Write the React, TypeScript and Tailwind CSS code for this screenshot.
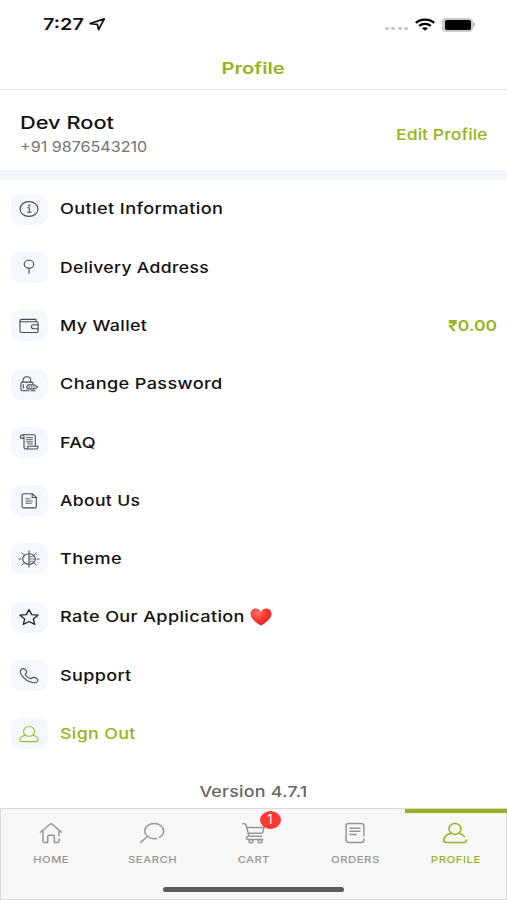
import React from "react";

type IconProps = { className?: string; children: React.ReactNode; box?: string };

function Icon({ className = "h-5 w-6", children, box = "0 0 24 20" }: IconProps) {
  return (
    <svg viewBox={box} fill="none" stroke="currentColor" strokeWidth="1.1" strokeLinecap="round" strokeLinejoin="round" className={"block shrink-0 " + className}>
      {children}
    </svg>
  );
}

const InfoIcon = () => (
  <Icon>
    <ellipse cx="12" cy="10" rx="9" ry="7.4" />
    <path d="M12.3 13.1V8.7h-1.5M10.6 13.2h3.4" />
    <circle cx="12.1" cy="6.5" r=".45" fill="currentColor" />
  </Icon>
);
const PinIcon = () => (
  <Icon>
    <ellipse cx="12" cy="7.2" rx="4.8" ry="3.9" />
    <path d="M12 11.2v5" />
  </Icon>
);
const WalletIcon = () => (
  <Icon>
    <path d="M3 5.3C3 4 3.8 3.4 5 3.4h14v2.200M3 5.100v9.800c0 1 .7 1.600 1.800 1.600h15c.8 0 1.300-.5 1.300-1.300V7c0-.8-.5-1.300-1.300-1.300H4" />
    <path d="M21 8.800h-4.200c-1.500 0-2.400.8-2.400 2s.9 2 2.400 2H21" />
  </Icon>
);
const LockIcon = () => (
  <Icon>
    <path d="M12 16.700H5.600c-1 0-1.700-.6-1.700-1.500V9.500c0-.9.7-1.400 1.700-1.400h8.800c1 0 1.600.5 1.600 1.400M6 8V6.600c0-2.200 1.300-3.800 3.800-3.800s3.900 1.600 3.900 3.800V8M6.300 10.500v3.500" />
    <path d="M9.800 12.900c0-1.300.8-2 2-2h5.600l3.200 2-2.600 2h-5.700c-1.500 0-2.500-.7-2.500-2ZM12 12.900h.5M14.300 12.900h.5M16.700 12.900h.5M14 16.700h4" />
  </Icon>
);
const ScrollIcon = () => (
  <Icon>
    <path d="M7 6.100H3.500V4c0-.8.7-1.300 1.700-1.300h11.600c1 0 1.500.6 1.500 1.400v10.100M5.200 2.800C6.400 2.900 7 3.500 7 4.600v10.800c0 .9.7 1.600 1.800 1.600h10.400c1 0 1.700-.7 1.700-1.600v-1.100H10.800v1.200c0 .9-.7 1.500-1.700 1.500" />
    <path d="M9.500 5.600h6M9.500 7.700h6M9.500 9.800h6M10.500 11.900h5" strokeWidth=".9" />
  </Icon>
);
const DocIcon = () => (
  <Icon>
    <path d="M6.800 2.800h8.700l3.800 3.400v9.200c0 .9-.7 1.500-1.700 1.500H6.800c-1 0-1.700-.6-1.700-1.500V4.300c0-.9.7-1.500 1.700-1.500ZM15.200 3v3.500h4" />
    <path d="M8.800 7.800h4M8.800 10h6.500M8.800 12.200h5.500" strokeWidth=".9" />
  </Icon>
);
const ThemeIcon = () => (
  <Icon>
    <ellipse cx="12" cy="10" rx="6.300" ry="5.300" />
    <path d="M12 1.800v16.400M2 10h2M20 10h2M4.800 3.900l1.700 1.500M19.200 3.900l-1.700 1.500M4.800 16.100l1.700-1.500M19.200 16.100l-1.700-1.500" strokeWidth="1" />
    <path d="M12 7.700h4M12 10h5.600M12 12.400h4" strokeWidth=".7" />
  </Icon>
);
const StarIcon = () => (
  <Icon>
    <path d="m12 2.600 2.700 5 6.300.6-4.700 3.800 1.400 5.400-5.700-2.900-5.700 2.900L7.700 12 3 8.200l6.300-.6Z" strokeWidth="1.300" stroke="#222" />
  </Icon>
);
const PhoneIcon = () => (
  <Icon>
    <path d="M4.100 3.700c1-.9 3-1.100 4-.3.9.8 1.500 1.800 1.600 2.700.1.900-1.300 1.300-1.400 2.200-.1 1.600 3.700 4.400 5.500 4.300 1.200-.1 1.500-1.300 2.900-1.200 1.300.1 3.300 1.100 4 2 .7 1-.3 2.500-1.600 3-1.400.5-3.600.4-5.400-.3C9.500 14.700 5.800 11.700 4 8.100 3.200 6.400 2.900 4.800 4.100 3.700Z" />
  </Icon>
);
const UserIcon = () => (
  <Icon>
    <ellipse cx="12" cy="7.400" rx="5.500" ry="4.900" />
    <path d="M8.200 11.300C5 12.100 2.900 13.500 2.900 15.700c0 1.100.8 1.900 2.200 1.900h13.800c1.400 0 2.200-.8 2.200-1.900 0-2.200-2.100-3.600-5.300-4.400" />
  </Icon>
);

const Heart = () => (
  <svg viewBox="0 0 22 18" className="ml-[6px] block h-[18px] w-[22px] shrink-0">
    <defs>
      <radialGradient id="heart" cx=".35" cy=".25" r=".85">
        <stop offset="0" stopColor="#ff7468" />
        <stop offset=".5" stopColor="#f8352f" />
        <stop offset="1" stopColor="#d9201f" />
      </radialGradient>
    </defs>
    <path d="M11 4C9.800 1.700 8 .6 5.900.6 2.800.6.500 2.800.500 5.700c0 4.600 5.500 8.900 10.500 11.900 5-3 10.500-7.300 10.500-11.900 0-2.900-2.300-5.100-5.400-5.100C14 .6 12.200 1.700 11 4Z" fill="url(#heart)" />
  </svg>
);

type Row = { label: string; icon: React.ReactNode; stretch: string; value?: string; accent?: boolean; heart?: boolean };

const rows: Row[] = [
  { label: "Outlet Information", icon: <InfoIcon />, stretch: "scale-x-[1.21]" },
  { label: "Delivery Address", icon: <PinIcon />, stretch: "scale-x-[1.17]" },
  { label: "My Wallet", icon: <WalletIcon />, stretch: "scale-x-[1.19]", value: "₹0.00" },
  { label: "Change Password", icon: <LockIcon />, stretch: "scale-x-[1.21]" },
  { label: "FAQ", icon: <ScrollIcon />, stretch: "scale-x-[1.2]" },
  { label: "About Us", icon: <DocIcon />, stretch: "scale-x-[1.17]" },
  { label: "Theme", icon: <ThemeIcon />, stretch: "scale-x-[1.21]" },
  { label: "Rate Our Application", icon: <StarIcon />, stretch: "scale-x-[1.206]", heart: true },
  { label: "Support", icon: <PhoneIcon />, stretch: "scale-x-[1.2]" },
  { label: "Sign Out", icon: <UserIcon />, stretch: "scale-x-[1.185]", accent: true },
];

const tabs = [
  {
    label: "HOME",
    stretch: "scale-x-[1.18]",
    icon: <path d="M2.500 10.200 12 2.200c.6-.5 1.400-.5 2 0l9.500 8M5 9v10c0 .9.6 1.400 1.500 1.400h3.200v-6c0-.8.5-1.200 1.200-1.200h4.200c.7 0 1.200.4 1.200 1.200v6h3.200c.9 0 1.600-.5 1.600-1.400v-2M21 9v4.500" />,
  },
  {
    label: "SEARCH",
    stretch: "scale-x-[1.19]",
    icon: <path d="M1.700 20.400 7.600 15M20.500 15.300c2.700-1.400 4.200-3.700 4.200-6.200 0-4.200-4.200-7.500-9.500-7.500S5.700 4.900 5.700 9.100s4.200 7.600 9.500 7.600c.9 0 1.700-.1 2.500-.3" />,
  },
  {
    label: "CART",
    stretch: "scale-x-[1.17]",
    icon: (
      <>
        <path d="M1.800 1.700h1.500c1 0 1.500.5 1.800 1.400L7.600 12.700c.3 1 1 1.500 2 1.500h11M5.700 5.500h17.300l-1 4.400c-.2.900-.8 1.400-1.700 1.400H7.400M7.800 14.200c-1.600.2-2.300.9-2.300 1.700s.7 1.500 1.800 1.500h14.500" />
        <ellipse cx="10" cy="19.200" rx="1.900" ry="1.600" />
        <ellipse cx="19.200" cy="19.200" rx="1.900" ry="1.600" />
      </>
    ),
  },
  {
    label: "ORDERS",
    stretch: "scale-x-[1.2]",
    icon: <path d="M21.900 13.800V4c0-1.500-1-2.400-2.700-2.400H6.800C5.100 1.600 4.100 2.500 4.100 4v14c0 1.500 1 2.400 2.700 2.400h12.400c1.700 0 2.700-.9 2.700-2.400v-1M8 6.200h10M8 9.300h10M8 12.400h6" />,
  },
  {
    label: "PROFILE",
    stretch: "scale-x-[1.2]",
    icon: (
      <>
        <ellipse cx="13" cy="6.900" rx="6" ry="5.500" />
        <path d="M9 11.300C4.600 12.600 1.700 15.400 1.700 18.500c0 1.200.8 1.900 2.200 1.900h18.200c1.600 0 2.400-1 2.200-2.400M17 11.300c2.300.7 4.200 1.800 5.500 3.200" />
      </>
    ),
  },
];

function StatusBar() {
  return (
    <div className="flex h-[46px] items-center pt-[3px] pr-[32px] pl-[43px]">
      <span className="w-[46px] origin-left scale-x-[1.2] text-[16.5px] font-semibold">7:27</span>
      <svg viewBox="0 0 18 15" className="h-[15px] w-[18px]" fill="none" stroke="#111" strokeWidth="1.8" strokeLinejoin="round">
        <path d="M1.200 6.500 15.300 1.800 9.600 12.600 8.300 7.300Z" />
      </svg>
      <div className="ml-auto flex items-center">
        <div className="mt-[8px] flex gap-[2.5px]">
          {[0, 1, 2, 3].map((i) => (
            <span key={i} className="h-[3.5px] w-[4px] rounded-full bg-[#c4c4c4]" />
          ))}
        </div>
        <svg viewBox="0 0 20 13" className="ml-[7px] h-[13px] w-[20px]" fill="none" stroke="#050505" strokeWidth="2.2">
          <path d="M.8 4.800C5.800.500 14.200.500 19.200 4.800M4.200 7.900c3.200-2.800 8.400-2.800 11.600 0" />
          <path d="M7 10.200c1.700-1.400 4.300-1.400 6 0l-3 2.600Z" fill="#050505" stroke="none" />
        </svg>
        <div className="ml-[7px] flex h-[14px] w-[31px] items-center rounded-[4px] bg-[#cbcbcb] px-[2.5px] py-[2px]">
          <div className="h-full w-full rounded-[2px] bg-black" />
        </div>
        <div className="h-[5px] w-[2px] rounded-r-full bg-[#bdbdbd]" />
      </div>
    </div>
  );
}

export default function App() {
  return (
    <div className="flex h-[900px] w-[507px] flex-col overflow-hidden bg-white font-['Inter',sans-serif] whitespace-nowrap text-[#111]">
      <StatusBar />
      <header className="flex h-[44px] items-center justify-center border-b border-[#e6e6e6] text-[#97b31b]">
        <h1 className="scale-x-[1.26] text-[16px] font-semibold">Profile</h1>
      </header>
      <section className="flex h-[80px] items-center justify-between pr-[19px] pl-5">
        <div className="flex flex-col pt-[8px]">
          <span className="w-fit origin-left scale-x-[1.245] text-[17.5px] leading-[26px] font-medium">Dev Root</span>
          <span className="w-fit origin-left scale-x-[1.15] text-[14px] leading-[22px] text-[#757575]">+91 9876543210</span>
        </div>
        <span className="mt-[10px] origin-right scale-x-[1.18] text-[15px] font-medium text-[#97b31b]">Edit Profile</span>
      </section>
      <div className="h-[10px] shrink-0 bg-[#f3f6fd]" />
      <ul className="flex h-[583px] shrink-0 flex-col">
        {rows.map((r) => (
          <li key={r.label} className={"flex flex-1 items-center pr-[10px] pl-[11px] " + (r.accent ? "text-[#97b31b]" : "")}>
            <div className={"flex h-[31px] w-[37px] items-center justify-center rounded-[10px] bg-[#f4f7fe] pr-[1px] " + (r.accent ? "text-[#9fba2c]" : "text-[#4a4a4a]")}>{r.icon}</div>
            <span className={"ml-3 origin-left pt-px text-[15px] font-medium tracking-[0.3px] " + r.stretch}>{r.label}</span>
            {r.heart && (
              <div className="ml-[31px]">
                <Heart />
              </div>
            )}
            {r.value && <span className="ml-auto origin-right scale-x-[1.165] pt-px text-[15px] font-semibold text-[#97b31b]">{r.value}</span>}
          </li>
        ))}
      </ul>
      <div className="flex flex-1 items-center justify-center pt-[14px] text-[#666]">
        <span className="scale-x-[1.19] text-[15px] font-medium tracking-[0.2px]">Version 4.7.1</span>
      </div>
      <nav className="flex h-[92px] shrink-0 flex-col border border-[#d9d9d9] bg-[#f7f7f7]">
        <div className="-mr-px -ml-px flex">
          {tabs.map((t) => {
            const active = t.label === "PROFILE";
            return (
              <div key={t.label} className={"flex h-[66px] flex-1 flex-col items-center border-t-4 pt-[9px] " + (active ? "-ml-px border-[#97b31b] pr-px text-[#97b31b]" : "border-transparent text-[#969696]")}>
                <div className="relative">
                  <svg viewBox="0 0 26 22" className="h-[22px] w-[26px]" fill="none" stroke="currentColor" strokeWidth="1.5" strokeLinecap="round" strokeLinejoin="round">
                    {t.icon}
                  </svg>
                  {t.label === "CART" && (
                    <span className="absolute -top-[11px] left-[19px] flex h-[18px] w-[21px] items-center justify-center rounded-[50%] bg-[#fb3b30] text-[13px] text-white">1</span>
                  )}
                </div>
                <span className={"mt-[9px] text-[9.5px] leading-[14px] font-medium tracking-[0.4px] " + t.stretch}>{t.label}</span>
              </div>
            );
          })}
        </div>
        <div className="mx-auto mt-[12px] h-[5px] w-[181px] rounded-full bg-[#5b5d5b]" />
      </nav>
    </div>
  );
}
